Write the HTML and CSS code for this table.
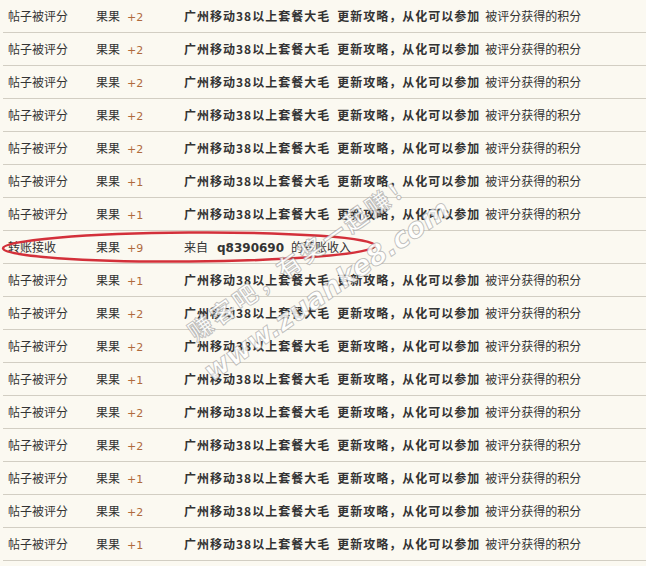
FILE: index.html
```html
<!DOCTYPE html>
<html lang="zh-CN">
<head>
  <meta charset="UTF-8" />
  <title>积分记录</title>
  <link rel="stylesheet" href="styles.css">
</head>
<body>

<div class="log">
  <div class="row"><span class="type">帖子被评分</span><span class="credit">果果<em>+2</em></span><span class="note"><b>广州移动38以上套餐大毛</b><b class="gap">更新攻略，从化可以参加</b><span class="tail">被评分获得的积分</span></span></div>
  <div class="row"><span class="type">帖子被评分</span><span class="credit">果果<em>+2</em></span><span class="note"><b>广州移动38以上套餐大毛</b><b class="gap">更新攻略，从化可以参加</b><span class="tail">被评分获得的积分</span></span></div>
  <div class="row"><span class="type">帖子被评分</span><span class="credit">果果<em>+2</em></span><span class="note"><b>广州移动38以上套餐大毛</b><b class="gap">更新攻略，从化可以参加</b><span class="tail">被评分获得的积分</span></span></div>
  <div class="row"><span class="type">帖子被评分</span><span class="credit">果果<em>+2</em></span><span class="note"><b>广州移动38以上套餐大毛</b><b class="gap">更新攻略，从化可以参加</b><span class="tail">被评分获得的积分</span></span></div>
  <div class="row"><span class="type">帖子被评分</span><span class="credit">果果<em>+2</em></span><span class="note"><b>广州移动38以上套餐大毛</b><b class="gap">更新攻略，从化可以参加</b><span class="tail">被评分获得的积分</span></span></div>
  <div class="row"><span class="type">帖子被评分</span><span class="credit">果果<em>+1</em></span><span class="note"><b>广州移动38以上套餐大毛</b><b class="gap">更新攻略，从化可以参加</b><span class="tail">被评分获得的积分</span></span></div>
  <div class="row"><span class="type">帖子被评分</span><span class="credit">果果<em>+1</em></span><span class="note"><b>广州移动38以上套餐大毛</b><b class="gap">更新攻略，从化可以参加</b><span class="tail">被评分获得的积分</span></span></div>
  <div class="row"><span class="type">转账接收</span><span class="credit">果果<em>+9</em></span><span class="note">来自<b class="user">q8390690</b>的转账收入</span></div>
  <div class="row"><span class="type">帖子被评分</span><span class="credit">果果<em>+1</em></span><span class="note"><b>广州移动38以上套餐大毛</b><b class="gap">更新攻略，从化可以参加</b><span class="tail">被评分获得的积分</span></span></div>
  <div class="row"><span class="type">帖子被评分</span><span class="credit">果果<em>+2</em></span><span class="note"><b>广州移动38以上套餐大毛</b><b class="gap">更新攻略，从化可以参加</b><span class="tail">被评分获得的积分</span></span></div>
  <div class="row"><span class="type">帖子被评分</span><span class="credit">果果<em>+2</em></span><span class="note"><b>广州移动38以上套餐大毛</b><b class="gap">更新攻略，从化可以参加</b><span class="tail">被评分获得的积分</span></span></div>
  <div class="row"><span class="type">帖子被评分</span><span class="credit">果果<em>+1</em></span><span class="note"><b>广州移动38以上套餐大毛</b><b class="gap">更新攻略，从化可以参加</b><span class="tail">被评分获得的积分</span></span></div>
  <div class="row"><span class="type">帖子被评分</span><span class="credit">果果<em>+2</em></span><span class="note"><b>广州移动38以上套餐大毛</b><b class="gap">更新攻略，从化可以参加</b><span class="tail">被评分获得的积分</span></span></div>
  <div class="row"><span class="type">帖子被评分</span><span class="credit">果果<em>+2</em></span><span class="note"><b>广州移动38以上套餐大毛</b><b class="gap">更新攻略，从化可以参加</b><span class="tail">被评分获得的积分</span></span></div>
  <div class="row"><span class="type">帖子被评分</span><span class="credit">果果<em>+1</em></span><span class="note"><b>广州移动38以上套餐大毛</b><b class="gap">更新攻略，从化可以参加</b><span class="tail">被评分获得的积分</span></span></div>
  <div class="row"><span class="type">帖子被评分</span><span class="credit">果果<em>+2</em></span><span class="note"><b>广州移动38以上套餐大毛</b><b class="gap">更新攻略，从化可以参加</b><span class="tail">被评分获得的积分</span></span></div>
  <div class="row"><span class="type">帖子被评分</span><span class="credit">果果<em>+1</em></span><span class="note"><b>广州移动38以上套餐大毛</b><b class="gap">更新攻略，从化可以参加</b><span class="tail">被评分获得的积分</span></span></div>
</div>

<!-- red mark + site watermark over the list -->
<svg class="overlay" width="646" height="566" viewBox="0 0 646 566">
  <ellipse class="mark" cx="189" cy="247" rx="186" ry="14.5" transform="rotate(-0.4 189 247)"/>
  <g class="wm" transform="rotate(-35 196 342)">
    <text x="196" y="342" class="wm-cn">赚客吧，有奖一起赚！</text>
  </g>
  <g class="wm" transform="rotate(-35 212 382)">
    <text x="212" y="382" class="wm-en">www.zuanke8.com</text>
  </g>
</svg>

</body>
</html>
```

FILE: styles.css
```css
* {
  box-sizing: border-box;
  margin: 0;
  padding: 0;
}

body {
  background: #fbf9f1;
  color: #333;
  font-family: "Noto Sans CJK SC", "Liberation Sans", sans-serif;
  font-size: 12px;
  width: 646px;
  height: 566px;
  overflow: hidden;
  position: relative;
}

.log {
  margin-left: 3px;
}

.row {
  display: flex;
  height: 33px;
  line-height: 32px;
  border-bottom: 1px solid #d2cec3;
  white-space: nowrap;
}

.type {
  width: 93px;
  padding-left: 5px;
}

.credit {
  width: 88px;
}

.credit em {
  font-style: normal;
  font-family: "DejaVu Sans", sans-serif;
  font-size: 11px;
  color: #b06a3c;
  margin-left: 7px;
}

.note b {
  letter-spacing: 1px;
}

.note .gap {
  margin-left: 7px;
}

.note .tail {
  margin-left: 5px;
}

.note .user {
  font-family: "DejaVu Sans", sans-serif;
  letter-spacing: 0;
  margin: 0 7px 0 9px;
}

.overlay {
  position: absolute;
  left: 0;
  top: 0;
  pointer-events: none;
}

.mark {
  fill: none;
  stroke: #d3303a;
  stroke-width: 2.5;
}

.wm text {
  fill: rgba(255, 255, 255, 0.85);
  stroke: rgba(120, 120, 120, 0.45);
  stroke-width: 1;
  font-weight: bold;
}

.wm-cn {
  font-family: "Noto Sans CJK SC", sans-serif;
  font-size: 24px;
  letter-spacing: 3px;
}

.wm-en {
  font-family: "DejaVu Sans", sans-serif;
  font-size: 28px;
  font-style: italic;
}
```
